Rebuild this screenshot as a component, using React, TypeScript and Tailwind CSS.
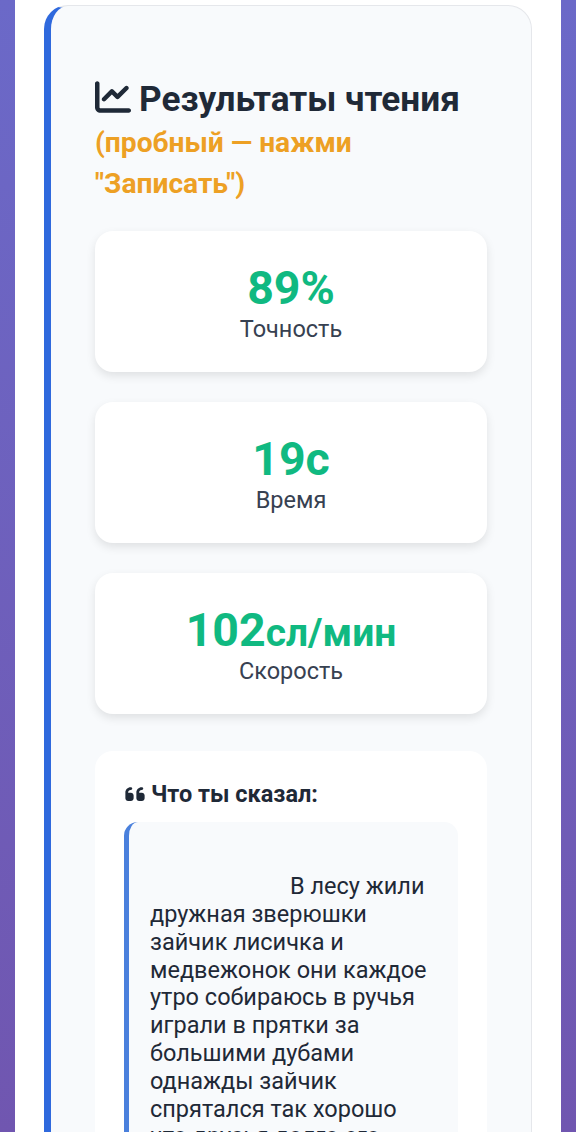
import { FaChartLine, FaQuoteLeft } from "react-icons/fa6";

const stats = [
  { value: "89%", label: "Точность" },
  { value: "19с", label: "Время" },
  { value: "102", unit: "сл/мин", label: "Скорость" },
];

export default function App() {
  return (
    <div className="h-[1132px] overflow-hidden bg-gradient-to-b from-[#6b69c8] to-[#7056b0] px-[15px] font-['Roboto',sans-serif]">
      <div className="h-full bg-white pl-[29px] pr-[29px] pt-[5px]">
        <div className="min-h-[1400px] rounded-[24px] border border-l-[7px] border-[#e5e7eb] border-l-[#2f69dd] bg-[#f8fafc] pl-[44px] pr-[44px] pt-[71px]">
          <h2 className="text-[35.2px] font-bold leading-[45px] text-[#1f2937]">
            <FaChartLine className="mr-[8px] inline h-[36px] w-[36px] align-[-4px]" />
            Результаты чтения
            <span className="block text-[28.2px] leading-[41px] text-[#eda024]">(пробный — нажми "Записать")</span>
          </h2>

          <div className="mt-[27px] flex flex-col gap-[29.5px]">
            {stats.map((s) => (
              <div key={s.label} className="flex h-[141.4px] flex-col items-center justify-center rounded-[18px] bg-white shadow-[0_4px_10px_rgba(0,0,0,0.1)]">
                <div className="text-[46.5px] font-bold leading-[56px] text-[#10b981]">
                  {s.value}
                  {s.unit && <span className="text-[39px] leading-none">{s.unit}</span>}
                </div>
                <div className="-mt-[1px] text-[23.5px] leading-[28px] text-[#374151]">{s.label}</div>
              </div>
            ))}
          </div>

          <div className="mt-[37px] rounded-[18px] bg-white pl-[29px] pr-[29px] pt-[29px]">
            <div className="flex items-center gap-[5px] text-[23.5px] font-bold leading-[28px] text-[#1f2937]">
              <FaQuoteLeft className="h-[22px] w-[22px]" />
              Что ты сказал:
            </div>
            <div className="mt-[14px] rounded-[14px] border-l-[5px] border-l-[#4a80dc] bg-[#f8fafc] pb-[30px] pl-[22px] pr-[22px] pt-[51px] text-[23.5px] leading-[27.8px] text-[#1f2937]">
              <p className="-ml-[1px] indent-[140px]">
                В лесу жили дружная зверюшки зайчик лисичка и медвежонок они каждое утро собираюсь в ручья играли в прятки за большими дубами однажды зайчик спрятался так хорошо что друзья долго его
              </p>
            </div>
          </div>
        </div>
      </div>
    </div>
  );
}
